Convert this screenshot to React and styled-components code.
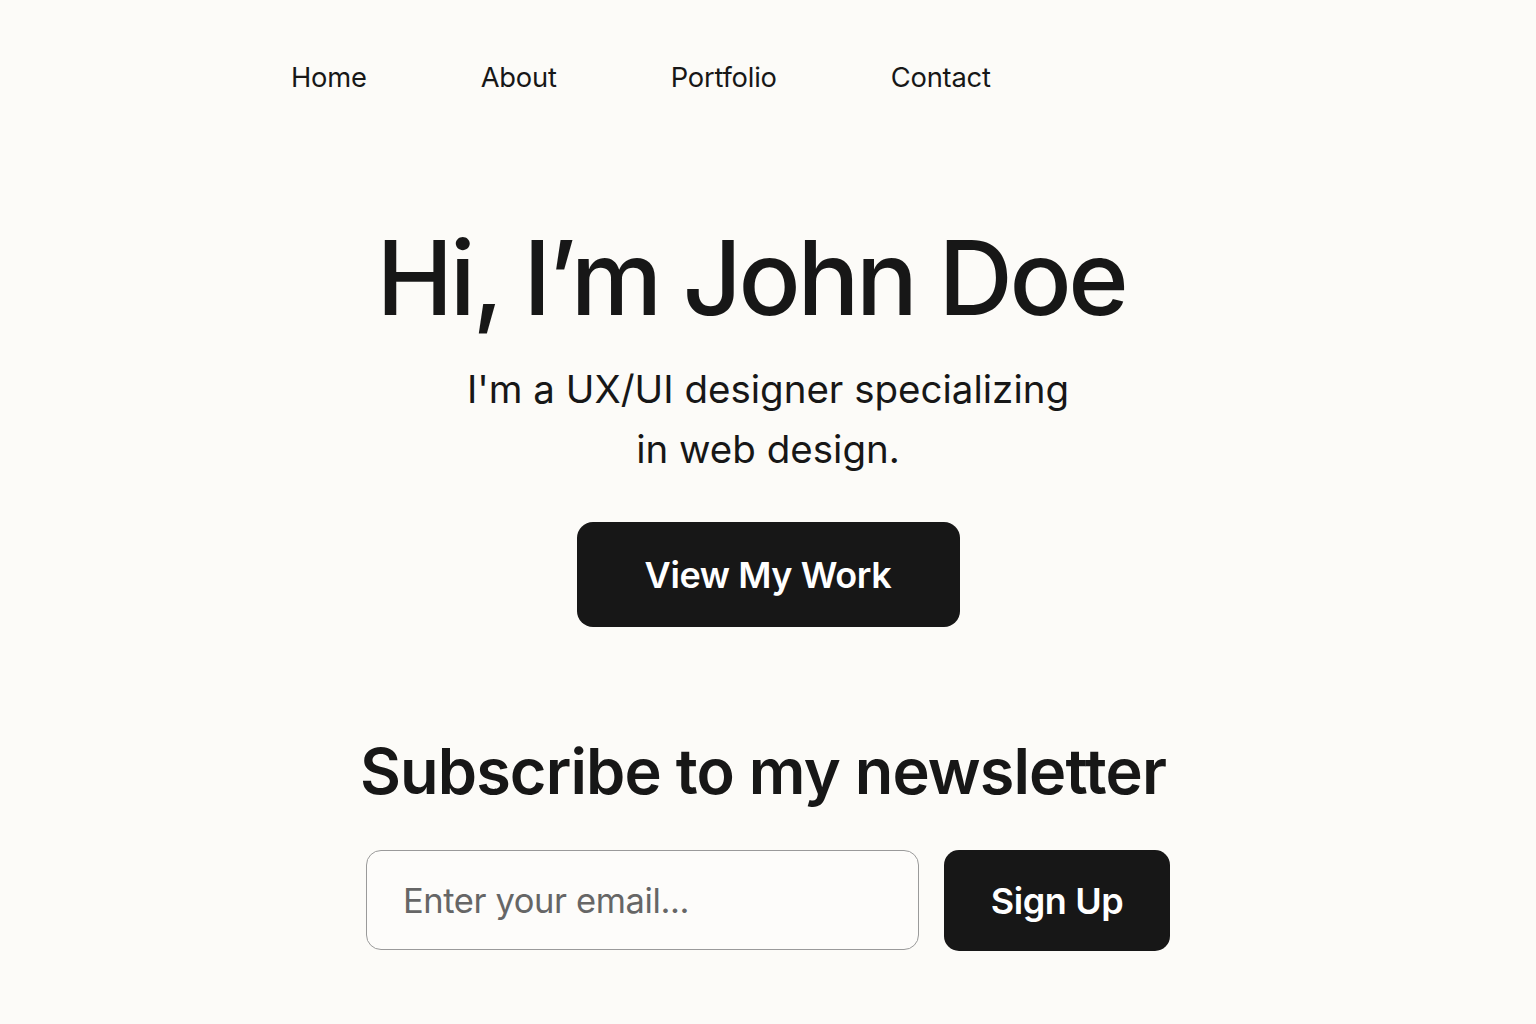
import React from 'react'
import styled, { createGlobalStyle } from 'styled-components'

const GlobalStyle = createGlobalStyle`
  html, body {
    margin: 0;
    padding: 0;
    background: #fcfbf8;
  }
  body {
    font-family: Inter, "Liberation Sans", Arial, sans-serif;
    color: #171717;
  }
`

const Page = styled.div`
  width: 1536px;
  height: 1024px;
  display: flex;
  flex-direction: column;
  box-sizing: border-box;
  padding-top: 58px;
`

const Nav = styled.nav`
  display: flex;
  gap: 114px;
  padding-left: 291px;
`

const NavLink = styled.a`
  font-size: 27.3px;
  line-height: 40px;
  color: #171717;
  text-decoration: none;
  letter-spacing: -0.2px;
`

const Hero = styled.section`
  display: flex;
  flex-direction: column;
  align-items: center;
  margin-top: 116px;
`

const Title = styled.h1`
  margin: 0;
  font-size: 103px;
  font-weight: 500;
  line-height: 128px;
  letter-spacing: -3.4px;
  margin-right: 34px;
`

const Lead = styled.p`
  margin: 17px 0 0;
  font-size: 38.5px;
  line-height: 60px;
  text-align: center;
`

const DarkButton = styled.button`
  font-family: inherit;
  background: #171717;
  color: #ffffff;
  border: none;
  border-radius: ${p => p.radius || 16}px;
  width: ${p => p.w}px;
  height: ${p => p.h}px;
  margin-top: ${p => p.top || 0}px;
  font-size: 36px;
  font-weight: 600;
  letter-spacing: -0.4px;
  cursor: pointer;
`

const Newsletter = styled.section`
  display: flex;
  flex-direction: column;
  align-items: center;
  margin-top: 104px;
`

const SubTitle = styled.h2`
  margin: 0;
  font-size: 63px;
  font-weight: 600;
  line-height: 80px;
  letter-spacing: -0.9px;
  margin-right: 10px;
`

const Form = styled.form`
  display: flex;
  gap: 25px;
  margin-top: 39px;
`

const EmailInput = styled.input`
  box-sizing: border-box;
  width: 553px;
  height: 100px;
  border: 1.5px solid #9a9a9a;
  border-radius: 15px;
  background: #fdfcfa;
  padding: 0 36px;
  font-family: inherit;
  font-size: 34.5px;
  color: #171717;
  letter-spacing: -0.4px;
  outline: none;
  &::placeholder {
    color: #666666;
  }
`

export default function App () {
  return (
    <>
      <GlobalStyle />
      <Page>
        <Nav>
          <NavLink href="#">Home</NavLink>
          <NavLink href="#">About</NavLink>
          <NavLink href="#">Portfolio</NavLink>
          <NavLink href="#">Contact</NavLink>
        </Nav>
        <Hero>
          <Title>Hi, I’m John Doe</Title>
          <Lead>I'm a UX/UI designer specializing<br />in web design.</Lead>
          <DarkButton w={383} h={105} top={43}>View My Work</DarkButton>
        </Hero>
        <Newsletter>
          <SubTitle>Subscribe to my newsletter</SubTitle>
          <Form onSubmit={e => e.preventDefault()}>
            <EmailInput type="email" placeholder="Enter your email..." />
            <DarkButton type="submit" w={226} h={101} radius={15}>Sign Up</DarkButton>
          </Form>
        </Newsletter>
      </Page>
    </>
  )
}
